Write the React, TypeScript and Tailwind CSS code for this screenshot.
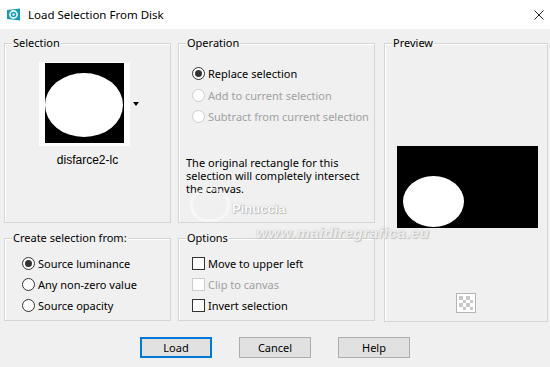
import type { ReactNode } from "react";

const UI = "font-['Noto_Sans',sans-serif]";

function Group({ label, className, children }: { label: string; className?: string; children?: ReactNode }) {
  return (
    <div className={`relative border border-[#d5d5d5] shadow-[inset_1px_1px_0_#ffffff] ${className ?? ""}`}>
      <span className="absolute left-[7px] top-[-9px] whitespace-nowrap bg-[#f0f0f0] px-[1px] text-[11px] leading-[16px] text-black">
        {label}
      </span>
      {children}
    </div>
  );
}

function Radio({ label, checked, disabled }: { label: string; checked?: boolean; disabled?: boolean }) {
  return (
    <div className="flex h-[21px] items-center gap-[3px] whitespace-nowrap">
      <span
        className={`flex h-[13px] w-[13px] shrink-0 items-center justify-center rounded-full border bg-white ${
          disabled ? "border-[#cccccc]" : "border-[#333333]"
        }`}
      >
        {checked && <span className="h-[7px] w-[7px] rounded-full bg-[#333333]" />}
      </span>
      <span className={`text-[11px] leading-[16px] ${disabled ? "text-[#a0a0a0]" : "text-black"}`}>{label}</span>
    </div>
  );
}

function Check({ label, disabled }: { label: string; disabled?: boolean }) {
  return (
    <div className="flex h-[21px] items-center gap-[3px] whitespace-nowrap">
      <span className={`h-[13px] w-[13px] shrink-0 border bg-white ${disabled ? "border-[#cccccc]" : "border-[#333333]"}`} />
      <span className={`text-[11px] leading-[16px] ${disabled ? "text-[#a0a0a0]" : "text-black"}`}>{label}</span>
    </div>
  );
}

function Btn({ label, primary }: { label: string; primary?: boolean }) {
  return (
    <button
      className={`h-[21px] w-[72px] bg-[#e1e1e1] text-[11px] leading-[16px] text-black ${
        primary ? "border-2 border-[#0078d7]" : "border border-[#adadad]"
      }`}
    >
      {label}
    </button>
  );
}

export default function App() {
  return (
    <div className={`relative h-[367px] w-[550px] overflow-hidden bg-[#f0f0f0] ${UI}`}>
      {/* title bar */}
      <div className="flex h-[29px] items-center bg-white pl-[6px] pr-[3px]">
        <svg width="15" height="13" viewBox="0 0 15 13">
          <path d="M1 2 L14 0.5 L14 12.5 L1 11 Z" fill="#1d9bb2" />
          <circle cx="7.5" cy="6.5" r="3.6" fill="none" stroke="#e6f7fa" strokeWidth="1.6" />
          <circle cx="7.5" cy="6.5" r="1.2" fill="#e6f7fa" />
        </svg>
        <span className="ml-[7px] text-[11.5px] leading-[16px] text-black">Load Selection From Disk</span>
        <svg className="ml-auto mr-[3px]" width="10" height="10" viewBox="0 0 10 10">
          <path d="M0.5 0.5 L9.5 9.5 M9.5 0.5 L0.5 9.5" stroke="#222" strokeWidth="1" />
        </svg>
      </div>

      {/* groups */}
      <div className="flex pl-[4px] pr-[2px] pt-[14px]">
        <div className="flex w-[167px] flex-col gap-[15px]">
          <Group label="Selection" className="h-[180px]">
            <div className="relative ml-[34px] mt-[18px] h-[84px] w-[91px] bg-white pl-[6px] pr-[6px] pt-[1px]">
              <div className="flex h-[80px] w-[79px] items-center bg-black pt-[4px]">
                <div className="h-[64px] w-[78px] rounded-[50%] bg-white" />
              </div>
              <span className="absolute left-[94px] top-[40px] h-0 w-0 border-x-[3px] border-t-[4px] border-x-transparent border-t-black" />
            </div>
            <div className="mt-[7px] text-center font-['Liberation_Sans',sans-serif] text-[12px] leading-[14px] text-black">
              disfarce2-lc
            </div>
          </Group>
          <Group label="Create selection from:" className="h-[83px]">
            <div className="pl-[17px] pt-[14px]">
              <Radio label="Source luminance" checked />
              <Radio label="Any non-zero value" />
              <Radio label="Source opacity" />
            </div>
          </Group>
        </div>

        <div className="ml-[7px] flex w-[197px] flex-col gap-[15px]">
          <Group label="Operation" className="h-[180px]">
            <div className="pl-[13px] pt-[19px]">
              <Radio label="Replace selection" checked />
              <div className="mt-[1px]">
                <Radio label="Add to current selection" disabled />
              </div>
              <Radio label="Subtract from current selection" disabled />
            </div>
            <p className="mt-[29px] w-[192px] pl-[7px] text-[11px] leading-[13px] text-black">
              The original rectangle for this selection will completely intersect the canvas.
            </p>
          </Group>
          <Group label="Options" className="h-[83px]">
            <div className="pl-[13px] pt-[14px]">
              <Check label="Move to upper left" />
              <Check label="Clip to canvas" disabled />
              <Check label="Invert selection" />
            </div>
          </Group>
        </div>

        <Group label="Preview" className="ml-[9px] h-[279px] w-[164px]">
          <div className="ml-[12px] mt-[102px] h-[82px] w-[141px] bg-black pl-[6px] pt-[30px]">
            <div className="h-[51px] w-[61px] rounded-[50%] bg-white" />
          </div>
          <div className="mx-auto mt-[65px] grid h-[20px] w-[20px] grid-cols-4 border border-[#b5b5b5] bg-white p-[2px]">
            {Array.from({ length: 16 }).map((_, i) => (
              <span key={i} className={(Math.floor(i / 4) + i) % 2 === 0 ? "bg-[#c8c8c8]" : "bg-white"} />
            ))}
          </div>
        </Group>
      </div>

      {/* buttons */}
      <div className="mt-[15px] flex justify-center gap-[27px]">
        <Btn label="Load" primary />
        <Btn label="Cancel" />
        <Btn label="Help" />
      </div>

      {/* watermark */}
      <div className="pointer-events-none absolute left-[190px] top-[188px] h-[34px] w-[40px] rounded-full border-[3px] border-white/70 opacity-70" />
      <span className="pointer-events-none absolute left-[232px] top-[202px] font-['Liberation_Sans',sans-serif] text-[13px] font-bold leading-[14px] text-white [text-shadow:0_0_1px_#9a9a9a,1px_1px_1px_#bbbbbb]">
        Pinuccia
      </span>
      <span className="pointer-events-none absolute left-[256px] top-[225px] font-['Liberation_Sans',sans-serif] text-[15px] font-bold italic leading-[16px] tracking-[0.5px] text-white/80 [text-shadow:0_0_1px_#a8a8a8,1px_1px_1px_#c4c4c4]">
        www.maidiregrafica.eu
      </span>
    </div>
  );
}
